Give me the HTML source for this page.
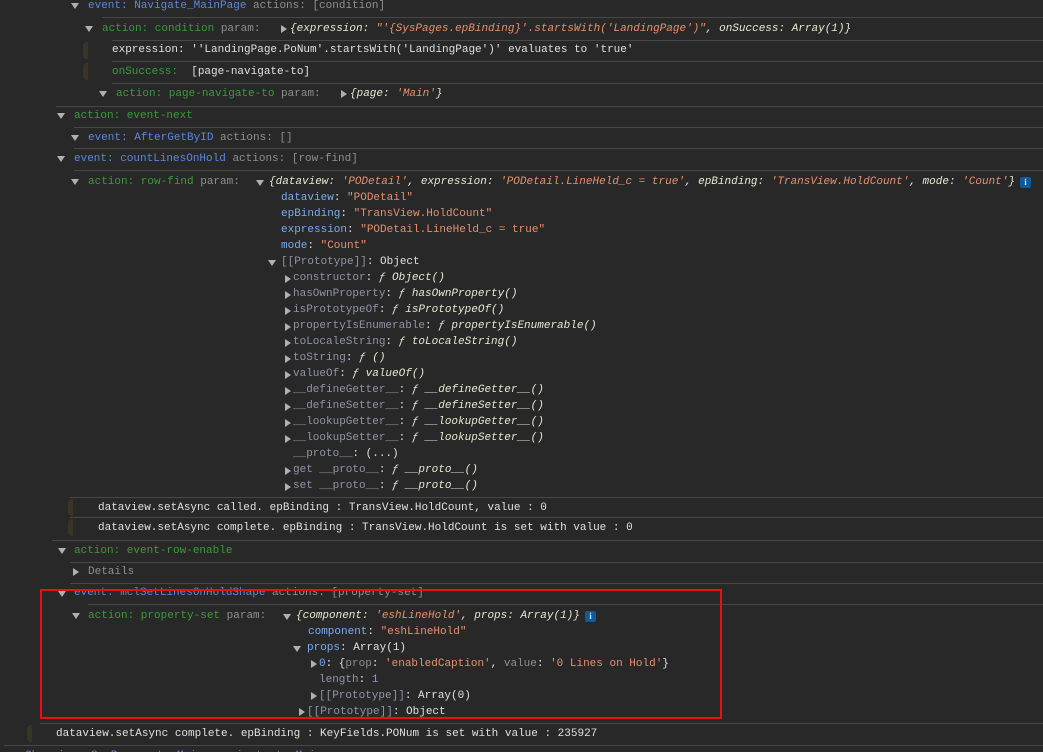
<!DOCTYPE html>
<html><head><meta charset="utf-8"><style>
html,body{margin:0;padding:0;background:#282828;width:1043px;height:752px;overflow:hidden;position:relative}
.r{position:absolute;font-family:"Liberation Mono",monospace;font-size:11px;line-height:14px;white-space:pre;color:#e0e0e0}
.s{position:absolute;height:1px;background:#474747;right:0}
.t{position:absolute;width:0;height:0}
.d{border-left:4px solid transparent;border-right:4px solid transparent;border-top:6px solid #b0b0b0}
.rt{border-top:4px solid transparent;border-bottom:4px solid transparent;border-left:6px solid #b0b0b0}
.bar{position:absolute;width:5px;height:17px;background:#3a3424;border-radius:4px 0 0 4px}
.ev{color:#5a87e0}.g{color:#3c9a3c}.gr{color:#8f8f8f}
.o{font-style:italic;color:#e8e8d0}.st{color:#e7906e}.k{color:#7aabf2}
.kg{color:#8f95a8}.n{color:#9e8cfa}.w{color:#e8e8e8}
.i{position:absolute;width:11px;height:11px;background:#0e5a9b;border-radius:2px;color:#cde;font:bold 9px "Liberation Serif",serif;text-align:center;line-height:11px}
</style></head><body>
<div class="s" style="top:17px;left:102px"></div>
<div class="s" style="top:40px;left:112px"></div>
<div class="s" style="top:61px;left:112px"></div>
<div class="s" style="top:83px;left:112px"></div>
<div class="s" style="top:106px;left:56px"></div>
<div class="s" style="top:127px;left:74px"></div>
<div class="s" style="top:148px;left:74px"></div>
<div class="s" style="top:170px;left:74px"></div>
<div class="s" style="top:497px;left:70px"></div>
<div class="s" style="top:517px;left:70px"></div>
<div class="s" style="top:540px;left:52px"></div>
<div class="s" style="top:562px;left:70px"></div>
<div class="s" style="top:583px;left:70px"></div>
<div class="s" style="top:604px;left:88px"></div>
<div class="s" style="top:723px;left:40px"></div>
<div class="s" style="top:745px;left:4px"></div>

<div class="t d" style="left:71px;top:3px"></div>
<div class="r" style="left:88px;top:-1px"><span class="ev">event: Navigate_MainPage</span> <span class="gr">actions: [condition]</span></div>
<div class="t d" style="left:85px;top:26px"></div>
<div class="r" style="left:102px;top:22px"><span class="g">action: condition</span> <span class="gr">param:</span></div>
<div class="t rt" style="left:281px;top:25px"></div>
<div class="r o" style="left:290px;top:22px">{expression: <span class="st">"'{SysPages.epBinding}'.startsWith('LandingPage')"</span>, onSuccess: Array(1)}</div>
<div class="bar" style="left:83px;top:42px"></div>
<div class="r" style="left:112px;top:43px">expression: ''LandingPage.PoNum'.startsWith('LandingPage')' evaluates to 'true'</div>
<div class="bar" style="left:83px;top:63px"></div>
<div class="r" style="left:112px;top:65px"><span class="g">onSuccess:</span>  [page-navigate-to]</div>
<div class="t d" style="left:99px;top:91px"></div>
<div class="r" style="left:116px;top:87px"><span class="g">action: page-navigate-to</span> <span class="gr">param:</span></div>
<div class="t rt" style="left:341px;top:90px"></div>
<div class="r o" style="left:350px;top:87px">{page: <span class="st">'Main'</span>}</div>
<div class="t d" style="left:57px;top:113px"></div>
<div class="r g" style="left:74px;top:109px">action: event-next</div>
<div class="t d" style="left:71px;top:135px"></div>
<div class="r" style="left:88px;top:131px"><span class="ev">event: AfterGetByID</span> <span class="gr">actions: []</span></div>
<div class="t d" style="left:57px;top:156px"></div>
<div class="r" style="left:74px;top:152px"><span class="ev">event: countLinesOnHold</span> <span class="gr">actions: [row-find]</span></div>
<div class="t d" style="left:71px;top:179px"></div>
<div class="r" style="left:88px;top:175px"><span class="g">action: row-find</span> <span class="gr">param:</span></div>
<div class="t d" style="left:256px;top:180px"></div>
<div class="r o" style="left:269px;top:175px">{dataview: <span class="st">'PODetail'</span>, expression: <span class="st">'PODetail.LineHeld_c = true'</span>, epBinding: <span class="st">'TransView.HoldCount'</span>, mode: <span class="st">'Count'</span>}</div>
<div class="i" style="left:1020px;top:177px">i</div>
<div class="r" style="left:281px;top:191px"><span class="k">dataview</span>: <span class="st">"PODetail"</span></div>
<div class="r" style="left:281px;top:207px"><span class="k">epBinding</span>: <span class="st">"TransView.HoldCount"</span></div>
<div class="r" style="left:281px;top:223px"><span class="k">expression</span>: <span class="st">"PODetail.LineHeld_c = true"</span></div>
<div class="r" style="left:281px;top:239px"><span class="k">mode</span>: <span class="st">"Count"</span></div>
<div class="t d" style="left:268px;top:260px"></div>
<div class="r" style="left:281px;top:255px"><span class="kg">[[Prototype]]</span>: Object</div>
<div class="t rt" style="left:285px;top:275px"></div><div class="r" style="left:293px;top:271px"><span class="kg">constructor</span>: <span class="o">ƒ Object()</span></div>
<div class="t rt" style="left:285px;top:291px"></div><div class="r" style="left:293px;top:287px"><span class="kg">hasOwnProperty</span>: <span class="o">ƒ hasOwnProperty()</span></div>
<div class="t rt" style="left:285px;top:307px"></div><div class="r" style="left:293px;top:303px"><span class="kg">isPrototypeOf</span>: <span class="o">ƒ isPrototypeOf()</span></div>
<div class="t rt" style="left:285px;top:323px"></div><div class="r" style="left:293px;top:319px"><span class="kg">propertyIsEnumerable</span>: <span class="o">ƒ propertyIsEnumerable()</span></div>
<div class="t rt" style="left:285px;top:339px"></div><div class="r" style="left:293px;top:335px"><span class="kg">toLocaleString</span>: <span class="o">ƒ toLocaleString()</span></div>
<div class="t rt" style="left:285px;top:355px"></div><div class="r" style="left:293px;top:351px"><span class="kg">toString</span>: <span class="o">ƒ ()</span></div>
<div class="t rt" style="left:285px;top:371px"></div><div class="r" style="left:293px;top:367px"><span class="kg">valueOf</span>: <span class="o">ƒ valueOf()</span></div>
<div class="t rt" style="left:285px;top:387px"></div><div class="r" style="left:293px;top:383px"><span class="kg">__defineGetter__</span>: <span class="o">ƒ __defineGetter__()</span></div>
<div class="t rt" style="left:285px;top:403px"></div><div class="r" style="left:293px;top:399px"><span class="kg">__defineSetter__</span>: <span class="o">ƒ __defineSetter__()</span></div>
<div class="t rt" style="left:285px;top:419px"></div><div class="r" style="left:293px;top:415px"><span class="kg">__lookupGetter__</span>: <span class="o">ƒ __lookupGetter__()</span></div>
<div class="t rt" style="left:285px;top:435px"></div><div class="r" style="left:293px;top:431px"><span class="kg">__lookupSetter__</span>: <span class="o">ƒ __lookupSetter__()</span></div>
<div class="r" style="left:293px;top:447px"><span class="kg">__proto__</span>: (...)</div>
<div class="t rt" style="left:285px;top:467px"></div><div class="r" style="left:293px;top:463px"><span class="kg">get __proto__</span>: <span class="o">ƒ __proto__()</span></div>
<div class="t rt" style="left:285px;top:483px"></div><div class="r" style="left:293px;top:479px"><span class="kg">set __proto__</span>: <span class="o">ƒ __proto__()</span></div>
<div class="bar" style="left:68px;top:499px"></div>
<div class="r" style="left:98px;top:501px">dataview.setAsync called. epBinding : TransView.HoldCount, value : 0</div>
<div class="bar" style="left:68px;top:519px"></div>
<div class="r" style="left:98px;top:521px">dataview.setAsync complete. epBinding : TransView.HoldCount is set with value : 0</div>
<div class="t d" style="left:58px;top:548px"></div>
<div class="r g" style="left:74px;top:544px">action: event-row-enable</div>
<div class="t rt" style="left:73px;top:568px"></div>
<div class="r gr" style="left:88px;top:565px">Details</div>
<div class="t d" style="left:58px;top:591px"></div>
<div class="r" style="left:74px;top:586px"><span class="ev">event: mclSetLinesOnHoldShape</span> <span class="gr">actions: [property-set]</span></div>
<div class="t d" style="left:72px;top:613px"></div>
<div class="r" style="left:88px;top:609px"><span class="g">action: property-set</span> <span class="gr">param:</span></div>
<div class="t d" style="left:283px;top:614px"></div>
<div class="r o" style="left:296px;top:609px">{component: <span class="st">'eshLineHold'</span>, props: Array(1)}</div>
<div class="i" style="left:585px;top:611px">i</div>
<div class="r" style="left:308px;top:625px"><span class="k">component</span>: <span class="st">"eshLineHold"</span></div>
<div class="t d" style="left:293px;top:646px"></div>
<div class="r" style="left:307px;top:641px"><span class="k">props</span>: Array(1)</div>
<div class="t rt" style="left:311px;top:660px"></div>
<div class="r" style="left:319px;top:657px"><span class="k">0</span>: {<span class="gr">prop</span>: <span class="st">'enabledCaption'</span>, <span class="gr">value</span>: <span class="st">'0 Lines on Hold'</span>}</div>
<div class="r" style="left:319px;top:673px"><span class="kg">length</span>: <span class="n">1</span></div>
<div class="t rt" style="left:311px;top:692px"></div>
<div class="r" style="left:319px;top:689px"><span class="kg">[[Prototype]]</span>: Array(0)</div>
<div class="t rt" style="left:299px;top:708px"></div>
<div class="r" style="left:307px;top:705px"><span class="kg">[[Prototype]]</span>: Object</div>
<div style="position:absolute;left:40px;top:589px;width:678px;height:126px;border:2px solid #e81010"></div>
<div class="bar" style="left:27px;top:725px"></div>
<div class="r" style="left:56px;top:727px">dataview.setAsync complete. epBinding : KeyFields.PONum is set with value : 235927</div>
<div class="r ev" style="left:25px;top:749px">Changing  SysPages  to Main  navigate to Main</div>
</body></html>
